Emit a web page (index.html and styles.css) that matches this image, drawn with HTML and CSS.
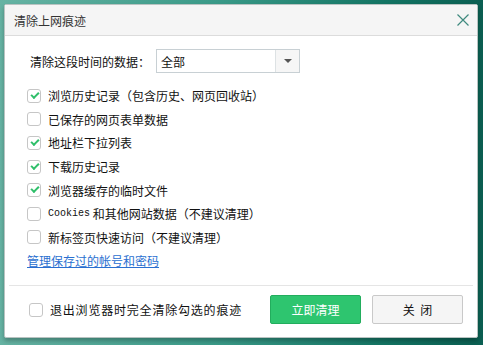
FILE: index.html
```html
<!DOCTYPE html>
<html lang="zh-CN">
<head>
  <meta charset="utf-8">
  <title>清除上网痕迹</title>
  <link rel="stylesheet" href="styles.css">
</head>
<body>
  <div class="dialog">
    <div class="titlebar">
      <span class="title">清除上网痕迹</span>
      <svg class="close-x" width="12" height="12" viewBox="0 0 12 12">
        <path d="M0.5 0.5 L11.5 11.5 M11.5 0.5 L0.5 11.5" stroke="#3f8a7e" stroke-width="1.2" fill="none"/>
      </svg>
    </div>

    <div class="content">
      <div class="range">
        <span class="range-label">清除这段时间的数据：</span>
        <div class="select">
          <span class="select-value">全部</span>
          <span class="select-btn"><span class="caret"></span></span>
        </div>
      </div>

      <ul class="options">
        <li><span class="box checked"></span>浏览历史记录（包含历史、网页回收站）</li>
        <li><span class="box"></span>已保存的网页表单数据</li>
        <li><span class="box checked"></span>地址栏下拉列表</li>
        <li><span class="box checked"></span>下载历史记录</li>
        <li><span class="box checked"></span>浏览器缓存的临时文件</li>
        <li><span class="box"></span><span class="latin">Cookies</span>&nbsp;和其他网站数据（不建议清理）</li>
        <li><span class="box"></span>新标签页快速访问（不建议清理）</li>
      </ul>

      <a class="manage" href="#">管理保存过的帐号和密码</a>
    </div>

    <div class="footer">
      <label class="exit-opt"><span class="box"></span>退出浏览器时完全清除勾选的痕迹</label>
      <div class="buttons">
        <button class="btn btn-primary">立即清理</button>
        <button class="btn">关&nbsp;&nbsp;闭</button>
      </div>
    </div>
  </div>
</body>
</html>
```

FILE: styles.css
```css
/* Reset */
* {
  margin: 0;
  padding: 0;
  box-sizing: border-box;
}

body {
  width: 483px;
  height: 345px;
  overflow: hidden;
  padding: 4px 5px 0 4px;
  font-family: "Noto Sans CJK SC", "Noto Sans", sans-serif;
  font-size: 12px;
  color: #222;
  background: linear-gradient(90deg, #66b3a3 0%, #3a9a88 45%, #137463 80%, #0b5f52 100%);
}

.dialog {
  width: 474px;
  height: 334px;
  background: #fff;
  border: 1px solid #b9c3c1;
  border-radius: 2px;
  box-shadow: 0 3px 4px rgba(0, 0, 0, 0.25);
  display: flex;
  flex-direction: column;
}

/* Title bar */
.titlebar {
  height: 31px;
  background: #f5f5f5;
  border-bottom: 1px solid #dcdcdc;
  display: flex;
  align-items: center;
  justify-content: space-between;
  padding: 0 8px 0 9px;
}

.title {
  font-size: 12px;
  color: #333;
}

/* Content */
.content {
  flex: 1;
  padding: 13px 0 0 22px;
}

.range {
  display: flex;
  align-items: center;
  padding-left: 3px;
}

.range-label {
  width: 126px;
  color: #111;
}

.select {
  width: 144px;
  height: 24px;
  border: 1px solid #c8d0d4;
  display: flex;
  align-items: center;
}

.select-value {
  flex: 1;
  padding-left: 4px;
  color: #111;
}

.select-btn {
  width: 24px;
  height: 100%;
  border-left: 1px solid #dde2e4;
  background: #f6f6f6;
  display: flex;
  align-items: center;
  justify-content: center;
}

.caret {
  width: 0;
  height: 0;
  border-left: 4px solid transparent;
  border-right: 4px solid transparent;
  border-top: 4px solid #555;
}

.options {
  list-style: none;
  margin-top: 11px;
}

.options li {
  height: 23.6px;
  display: flex;
  align-items: center;
  color: #111;
}

.latin {
  font-family: "Liberation Mono", monospace;
  font-size: 10px;
}

/* Checkbox */
.box {
  width: 14px;
  height: 14px;
  border: 1px solid #c6c6c6;
  border-radius: 3px;
  background: #fff;
  margin-right: 7px;
  flex: none;
  position: relative;
}

.box.checked::after {
  content: "";
  position: absolute;
  left: 3px;
  top: 2px;
  width: 6px;
  height: 3px;
  border-left: 2px solid #2fbf6a;
  border-bottom: 2px solid #2fbf6a;
  transform: rotate(-45deg);
}

.manage {
  display: inline-block;
  margin-top: 3px;
  color: #2a6fd0;
  text-decoration: underline;
}

/* Footer */
.footer {
  margin: 0 4px 13px 4px;
  border-top: 1px solid #e5e5e5;
  padding: 9px 10px 0 20px;
  display: flex;
  align-items: center;
  justify-content: space-between;
}

.exit-opt {
  display: flex;
  align-items: center;
  font-size: 12px;
  letter-spacing: 0.8px;
  color: #111;
}

.buttons {
  display: flex;
  gap: 11px;
}

.btn {
  width: 91px;
  height: 29px;
  border: 1px solid #c9c9c9;
  border-radius: 2px;
  background: #f5f5f5;
  font-family: inherit;
  font-size: 12px;
  color: #111;
}

.btn-primary {
  background: #2ec56f;
  border-color: #22ad5d;
  color: #fff;
}
```
